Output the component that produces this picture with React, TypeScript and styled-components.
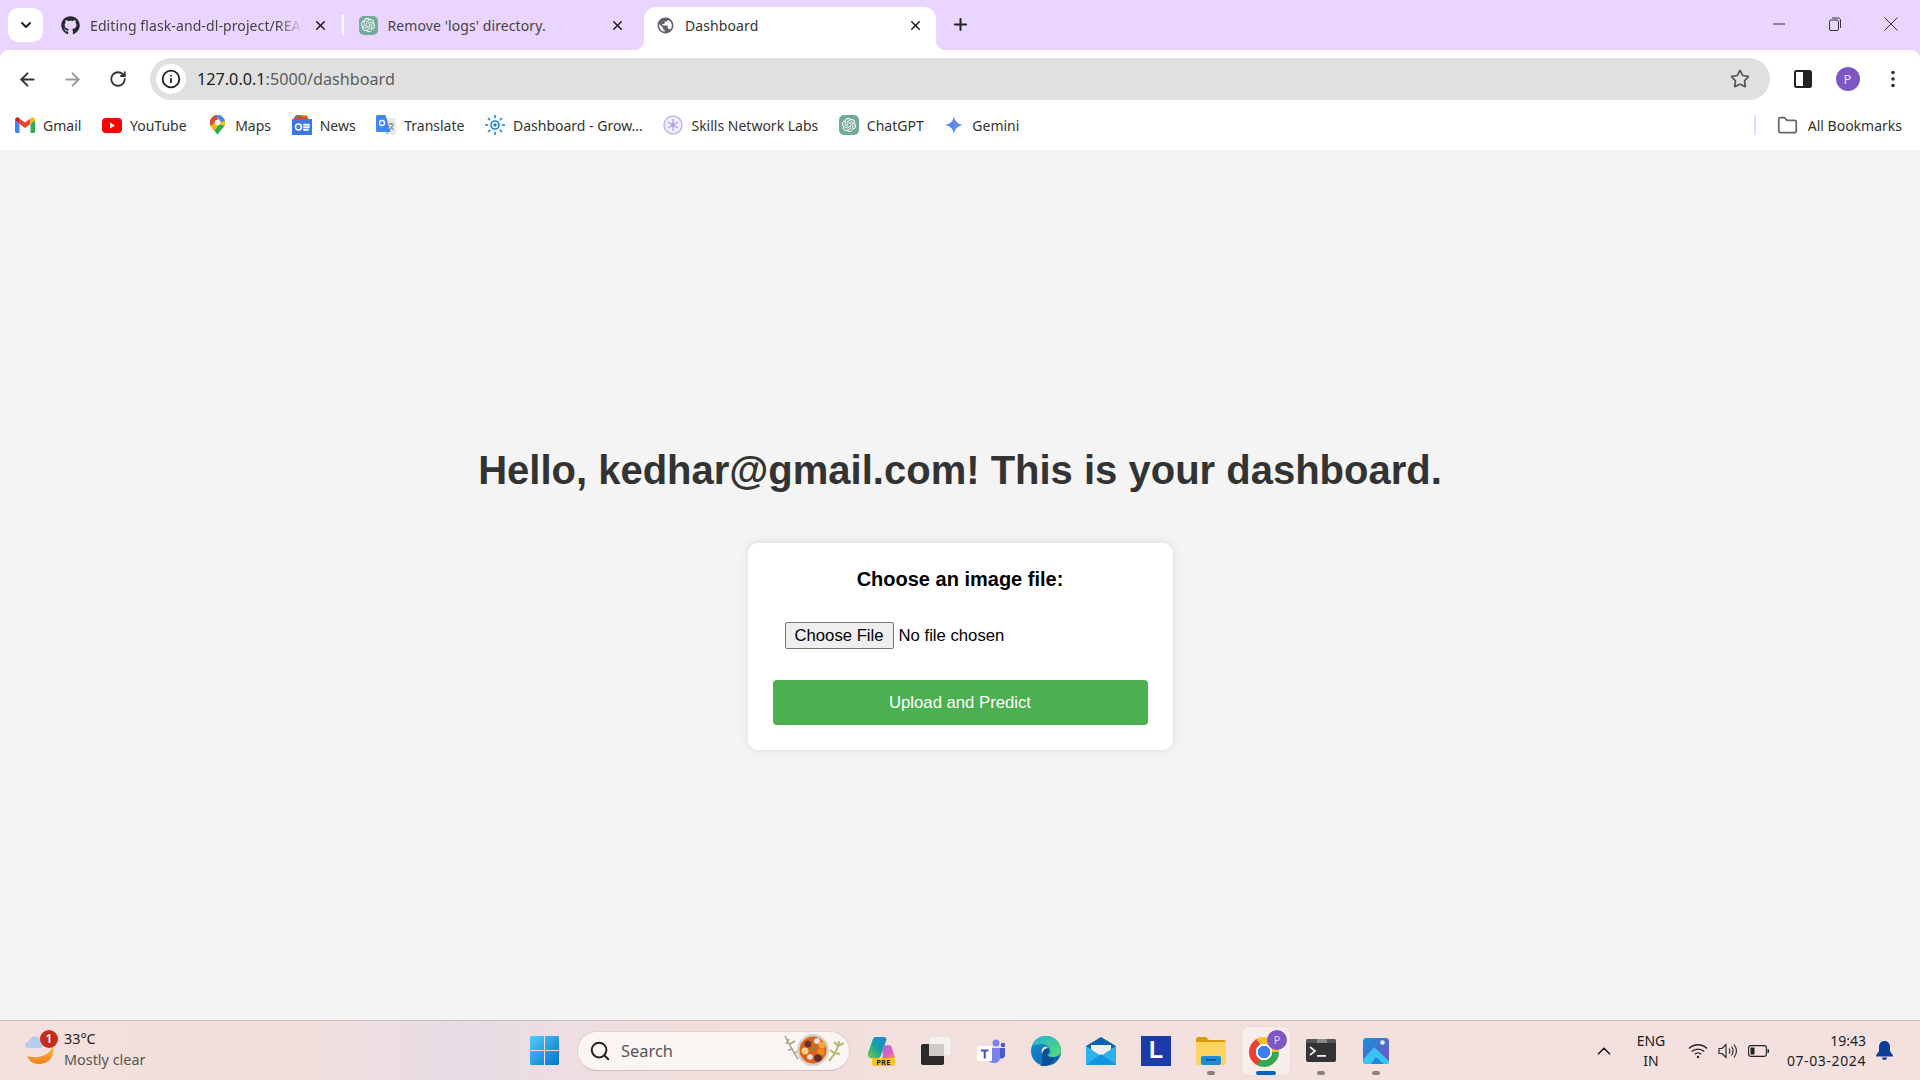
import type { ReactNode } from 'react';
import styled, { createGlobalStyle } from 'styled-components';
import { ArrowLeft, ArrowRight, ChevronDown, ChevronUp, Folder, Info, Plus, RotateCw, Search, Star, X } from 'lucide-react';
import { MdPublic } from 'react-icons/md';
import { FaGithub } from 'react-icons/fa';
import { SiOpenai } from 'react-icons/si';

const uiFont = `"Noto Sans", "Open Sans", sans-serif`;

const GlobalStyle = createGlobalStyle`
  html, body {
    margin: 0;
    padding: 0;
    height: 100%;
    overflow: hidden;
    background: #f4f4f4;
  }
  * {
    box-sizing: border-box;
  }
`;

const Screen = styled.div`
  width: 1920px;
  height: 1080px;
  display: flex;
  flex-direction: column;
  background: #e9d5ff;
  font-family: ${uiFont};
`;

/* ---------- tab strip ---------- */

const TabStrip = styled.div`
  height: 50px;
  flex: none;
  display: flex;
  align-items: flex-end;
  padding-left: 8px;
`;

const TabSearch = styled.div`
  width: 35px;
  height: 34px;
  margin: 0 6px 8px 0;
  border-radius: 10px;
  background: #fff;
  color: #222;
  display: flex;
  align-items: center;
  justify-content: center;
`;

const Tab = styled.div<{ $active?: boolean; $divider?: boolean }>`
  position: relative;
  width: 292px;
  height: 43px;
  margin-right: 5.5px;
  padding: 0 12px 7px 12px;
  display: flex;
  align-items: center;
  border-radius: 12px 12px 0 0;
  background: ${({ $active }) => ($active ? '#fff' : 'transparent')};
  color: ${({ $active }) => ($active ? '#333' : '#444')};

  ${({ $active }) =>
    $active &&
    `
    &::before, &::after {
      content: '';
      position: absolute;
      bottom: 0;
      width: 10px;
      height: 10px;
    }
    &::before {
      left: -10px;
      background: radial-gradient(circle at 0 0, transparent 10px, #fff 10.5px);
    }
    &::after {
      right: -10px;
      background: radial-gradient(circle at 100% 0, transparent 10px, #fff 10.5px);
    }
  `}

  ${({ $divider }) =>
    $divider &&
    `
    &::after {
      content: '';
      position: absolute;
      right: -3px;
      top: 8px;
      width: 2px;
      height: 20px;
      background: #fff;
    }
  `}
`;

const TabIcon = styled.div`
  width: 19px;
  height: 19px;
  flex: none;
  display: flex;
  align-items: center;
  justify-content: center;
`;

const GptFavicon = styled(TabIcon)<{ $size?: number }>`
  width: ${({ $size }) => $size ?? 19}px;
  height: ${({ $size }) => $size ?? 19}px;
  border-radius: 5px;
  background: #74aa9c;
  color: #fff;
`;

const TabTitle = styled.div<{ $fade?: boolean }>`
  margin-left: 10px;
  flex: 1;
  font-size: 14px;
  letter-spacing: 0.1px;
  white-space: nowrap;
  overflow: hidden;
  ${({ $fade }) =>
    $fade &&
    `
    mask-image: linear-gradient(90deg, #000 88%, transparent 100%);
  `}
`;

const TabClose = styled.div`
  width: 18px;
  height: 18px;
  margin-left: 8px;
  flex: none;
  color: #222;
  display: flex;
  align-items: center;
  justify-content: center;
`;

const NewTab = styled.div`
  width: 20px;
  height: 43px;
  margin-left: 9px;
  padding-bottom: 9px;
  color: #222;
  display: flex;
  align-items: center;
  justify-content: center;
  align-self: flex-end;
`;

const WindowControls = styled.div`
  margin-left: auto;
  height: 50px;
  display: flex;
  align-self: flex-start;
  padding-right: 1px;
`;

const WindowButton = styled.div`
  width: 56px;
  height: 48px;
  display: flex;
  align-items: center;
  justify-content: center;
  color: #333;
`;

/* ---------- toolbar ---------- */

const Toolbar = styled.div`
  height: 50px;
  flex: none;
  padding: 8px 5px 0 5px;
  display: flex;
  align-items: stretch;
  background: #fff;
  border-radius: 9px 9px 0 0;
`;

const NavButton = styled.div<{ $dim?: boolean }>`
  width: 45px;
  flex: none;
  display: flex;
  align-items: center;
  justify-content: center;
  color: ${({ $dim }) => ($dim ? '#9a9a9a' : '#333')};
`;

const AddressBar = styled.div`
  flex: 1;
  margin: 0 10px 0 10px;
  border-radius: 21px;
  background: #e0e0e0;
  display: flex;
  align-items: center;
  padding: 0 20px 0 6px;
`;

const InfoBadge = styled.div`
  width: 30px;
  height: 30px;
  border-radius: 50%;
  background: #fff;
  color: #222;
  display: flex;
  align-items: center;
  justify-content: center;
`;

const Url = styled.div`
  margin-left: 11px;
  font-size: 16.2px;
  color: #5c5c5c;
  white-space: nowrap;
`;

const UrlHost = styled.span`
  color: #202020;
`;

const StarSlot = styled.div`
  margin-left: auto;
  color: #555;
  display: flex;
`;

const Avatar = styled.div`
  width: 24px;
  height: 24px;
  border-radius: 50%;
  background: #7e57c2;
  color: #e8def8;
  font-size: 13px;
  display: flex;
  align-items: center;
  justify-content: center;
`;

/* ---------- bookmarks ---------- */

const BookmarkBar = styled.div`
  height: 50px;
  flex: none;
  padding: 0 18px 0 15px;
  display: flex;
  align-items: center;
  background: #fff;
`;

const Bookmark = styled.div`
  display: flex;
  align-items: center;
  gap: 8px;
  margin-right: 20.6px;
  font-size: 14px;
  color: #333;
  white-space: nowrap;
`;

const BookmarkIcon = styled.div`
  width: 20px;
  height: 20px;
  flex: none;
  display: flex;
  align-items: center;
  justify-content: center;
`;

const BookmarkDivider = styled.div`
  margin-left: auto;
  width: 2px;
  height: 20px;
  background: #e9d5ff;
  margin-right: 21px;
`;

const AllBookmarks = styled.div`
  display: flex;
  align-items: center;
  gap: 10px;
  font-size: 14px;
  color: #333;
  white-space: nowrap;
`;

/* ---------- page ---------- */

const Page = styled.main`
  flex: 1;
  min-height: 0;
  padding-top: 297px;
  background: #f4f4f4;
  display: flex;
  flex-direction: column;
  align-items: center;
  font-family: 'Liberation Sans', Arial, sans-serif;
`;

const Heading = styled.h1`
  margin: 0 0 50px;
  font-size: 40px;
  line-height: 46px;
  font-weight: 700;
  color: #333;
`;

const Card = styled.form`
  width: 425px;
  height: 207px;
  padding: 25px 25px 25px;
  background: #fff;
  border-radius: 10px;
  box-shadow: 0 0 10px rgba(0, 0, 0, 0.1);
  display: flex;
  flex-direction: column;
`;

const FieldLabel = styled.label`
  font-size: 20px;
  line-height: 23px;
  font-weight: 700;
  color: #000;
  text-align: center;
`;

const FileInput = styled.input`
  margin: 31px 0 0 12px;
  width: 340px;
  height: 27px;
  font-family: 'Liberation Sans', Arial, sans-serif;
  font-size: 16.7px;
  color: #000;

  &::file-selector-button {
    height: 27px;
    margin-right: 5px;
    padding: 0 9px;
    border: 1px solid #767676;
    border-radius: 2px;
    background: #efefef;
    color: #000;
    font: inherit;
  }
`;

const SubmitButton = styled.button`
  margin-top: 31px;
  height: 45px;
  border: none;
  border-radius: 4px;
  background: #4caf50;
  color: #fff;
  font-family: 'Liberation Sans', Arial, sans-serif;
  font-size: 16.7px;
`;

/* ---------- taskbar ---------- */

const Taskbar = styled.footer`
  height: 60px;
  flex: none;
  display: flex;
  align-items: center;
  border-top: 1px solid #cdbcbc;
  background: linear-gradient(90deg, #f4e0dc 0%, #f1dfdd 16%, #e8dde6 24%, #f1dfdd 36%, #f3e1de 60%, #f3e0df 100%);
`;

const Weather = styled.div`
  width: 530px;
  flex: none;
  padding-left: 24px;
  display: flex;
  align-items: center;
`;

const WeatherIcon = styled.div`
  position: relative;
  width: 30px;
  height: 36px;
  flex: none;
  margin-right: 10px;
`;

const WeatherBadge = styled.div`
  position: absolute;
  top: -3px;
  right: -4px;
  width: 18px;
  height: 18px;
  border-radius: 50%;
  background: #c42b1c;
  color: #fff;
  font-size: 12px;
  font-weight: 600;
  display: flex;
  align-items: center;
  justify-content: center;
`;

const WeatherText = styled.div`
  font-size: 14.4px;
  line-height: 21px;
  color: #1c1c1c;
  margin-top: -4px;
`;

const WeatherSub = styled.div`
  color: #555;
`;

const SearchPill = styled.div`
  width: 273px;
  height: 40px;
  margin: 0 7px 0 18px;
  padding: 0 1px 0 11px;
  flex: none;
  border-radius: 20px;
  background: #fbf5f4;
  border: 1px solid #e0d2d0;
  border-bottom-color: #cfc0be;
  display: flex;
  align-items: center;
  gap: 10px;
  font-size: 16.4px;
  color: #555;
`;

const Dish = styled.div`
  margin-left: auto;
  display: flex;
`;

const AppList = styled.div`
  display: flex;
  gap: 7px;
`;

const AppCell = styled.div<{ $active?: boolean }>`
  position: relative;
  width: 48px;
  height: 48px;
  border-radius: 5px;
  display: flex;
  align-items: center;
  justify-content: center;
  background: ${({ $active }) => ($active ? '#f7eeec' : 'transparent')};
  ${({ $active }) => $active && 'box-shadow: 0 0 1px rgba(0, 0, 0, 0.25);'}
`;

const RunDot = styled.div<{ $active?: boolean }>`
  position: absolute;
  bottom: 0;
  left: 50%;
  transform: translateX(-50%);
  width: ${({ $active }) => ($active ? 20 : 8)}px;
  height: 3.5px;
  border-radius: 2px;
  background: ${({ $active }) => ($active ? '#0067c0' : '#8a8080')};
`;

const CopilotSlot = styled.div`
  display: flex;
  margin-bottom: 4px;
`;

const PreTag = styled.div`
  position: absolute;
  left: 15px;
  top: 31px;
  width: 23px;
  height: 8px;
  border-radius: 2px;
  background: #fdc70c;
  color: #222;
  font-size: 7.5px;
  line-height: 8px;
  font-weight: 700;
  text-align: center;
  letter-spacing: 0.3px;
`;

const LetterTile = styled.div`
  width: 30px;
  height: 30px;
  background: #1c3aa9;
  color: #fff;
  font-family: 'Liberation Sans', Arial, sans-serif;
  font-weight: 700;
  font-size: 23px;
  display: flex;
  align-items: center;
  justify-content: center;
`;

const ChromeLogo = styled.div`
  width: 30px;
  height: 30px;
  margin: 2px 5px 0 0;
  border-radius: 50%;
  background:
    radial-gradient(circle, #3a7ff0 0 6px, #fff 6.5px 8px, transparent 8.5px),
    conic-gradient(from -30deg, #fbc02d 0 120deg, #34a853 120deg 240deg, #ea4335 240deg 360deg);
`;

const ChromeBadge = styled.div`
  position: absolute;
  top: 3px;
  right: 3px;
  width: 20px;
  height: 20px;
  border-radius: 50%;
  background: #7e57c2;
  color: #e0d4f5;
  font-size: 11px;
  display: flex;
  align-items: center;
  justify-content: center;
`;

const Tray = styled.div`
  margin-left: auto;
  padding-right: 26px;
  display: flex;
  align-items: center;
  color: #1c1c1c;
`;

const TrayIcon = styled.div<{ $width?: number }>`
  width: ${({ $width }) => $width ?? 30}px;
  display: flex;
  justify-content: center;
`;

const Lang = styled.div`
  width: 48px;
  margin: 0 8px;
  text-align: center;
  font-size: 14px;
  line-height: 20px;
`;

const Clock = styled.div`
  width: 93px;
  text-align: right;
  font-size: 14px;
  line-height: 20px;
  white-space: nowrap;
`;

const ClockDate = styled.div`
  letter-spacing: 0.6px;
`;

const Bell = styled.div`
  margin-left: 10px;
  width: 18px;
  display: flex;
`;

/* ---------- drawn icons ---------- */

const GmailIcon = () => (
  <svg width="20" height="16" viewBox="0 0 20 16">
    <path d="M0 3v11.500C0 15.300.7 16 1.500 16H4.500V7z" fill="#4285f4" />
    <path d="M20 3v11.500c0 .8-.7 1.500-1.500 1.500h-3V7z" fill="#34a853" />
    <path d="M4.500 7V1.500L10 5.600l5.500-4.100V7L10 11z" fill="#ea4335" />
    <path d="M0 3c0-2.500 2.800-3.700 4.500-2V7z" fill="#c5221f" />
    <path d="M20 3c0-2.500-2.800-3.700-4.500-2V7z" fill="#fbbc04" />
  </svg>
);

const YoutubeIcon = () => (
  <svg width="20" height="15" viewBox="0 0 20 15">
    <rect width="20" height="15" rx="4" fill="#f00" />
    <path d="M8 4.500v6l5-3z" fill="#fff" />
  </svg>
);

const MapsIcon = () => (
  <svg width="15" height="20" viewBox="0 0 15 20">
    <defs>
      <clipPath id="pin">
        <path d="M7.500 0A7.500 7.500 0 0 0 0 7.500c0 3.800 2.500 5.800 4.500 8.300 1.400 1.700 2.400 3 3 4.200.6-1.200 1.600-2.500 3-4.200 2-2.500 4.500-4.500 4.500-8.300A7.500 7.500 0 0 0 7.500 0z" />
      </clipPath>
    </defs>
    <g clipPath="url(#pin)">
      <rect width="15" height="20" fill="#34a853" />
      <path d="M0 0h15v11L7 9 0 5z" fill="#fbbc04" />
      <path d="M0 0h7.500L7 6 1 12H0z" fill="#ea4335" />
      <path d="M5 0h10v6l-4 1-2-3z" fill="#4285f4" />
      <path d="M0 11l5-3 3 3-4 5z" fill="#fbbc04" />
    </g>
    <circle cx="7.500" cy="7.500" r="2.800" fill="#fff" />
  </svg>
);

const NewsIcon = () => (
  <svg width="20" height="20" viewBox="0 0 20 20">
    <path d="M3 3V1.500C3 .7 3.700 0 4.500 0h9c.8 0 1.500.7 1.500 1.500V3z" fill="#34a853" />
    <path d="M10 0h4l3 4h-7z" fill="#fbbc04" />
    <path d="M2 2l13-1 1 3H2z" fill="#ea4335" />
    <rect y="4" width="20" height="16" fill="#3b78e7" />
    <circle cx="6.500" cy="12" r="3" fill="none" stroke="#fff" strokeWidth="1.500" />
    <path d="M6.500 12H9.500M11.500 9h6v1.500h-6zM11.500 11.500h6V13h-6zM11.500 14h5v1.500h-5z" fill="#fff" stroke="#fff" strokeWidth="0.400" />
  </svg>
);

const TranslateIcon = () => (
  <svg width="20" height="20" viewBox="0 0 20 20">
    <path d="M9 3h9.500c.8 0 1.500.7 1.500 1.500v14c0 .8-.7 1.500-1.500 1.500H10z" fill="#e8eaed" />
    <path d="M1.500 0h8l5 17H1.500C.7 17 0 16.300 0 15.500v-14C0 .7.700 0 1.500 0z" fill="#4285f4" />
    <path d="M10 17l2.500 3-1.500-3z" fill="#3367d6" />
    <circle cx="6" cy="8" r="2.500" fill="none" stroke="#fff" strokeWidth="1.300" />
    <path d="M13 9h5M15.500 8v1.500M14 15l3.500-5M14.500 11l3 4" stroke="#777" strokeWidth="1" fill="none" />
  </svg>
);

const DashboardIcon = () => (
  <svg width="20" height="20" viewBox="0 0 20 20" fill="none">
    <circle cx="10" cy="10" r="4" stroke="#1a84d8" strokeWidth="1.600" />
    <circle cx="10" cy="10" r="1.700" fill="#1a84d8" />
    <path d="M10 0v3.200M10 16.800V20M0 10h3.200M16.800 10H20M3 3l2.200 2.200M14.800 14.800L17 17M17 3l-2.200 2.200M5.200 14.800L3 17" stroke="#1a84d8" strokeWidth="1.600" />
  </svg>
);

const SkillsIcon = () => (
  <svg width="20" height="20" viewBox="0 0 20 20" fill="none">
    <circle cx="10" cy="10" r="9" fill="#f1ecfb" stroke="#c7b8ea" strokeWidth="1.500" />
    <path d="M10 4v12M5 7l10 6M15 7L5 13" stroke="#b3a2de" strokeWidth="1.300" />
    <circle cx="10" cy="10" r="2" fill="#b3a2de" />
  </svg>
);

const GeminiIcon = () => (
  <svg width="18" height="18" viewBox="0 0 18 18">
    <defs>
      <linearGradient id="gem" x1="0" y1="1" x2="1" y2="0">
        <stop offset="0" stopColor="#4285f4" />
        <stop offset="1" stopColor="#7b8fe8" />
      </linearGradient>
    </defs>
    <path d="M9 0c.8 5 3.500 8 9 9-5.500 1-8.200 4-9 9-.8-5-3.500-8-9-9 5.500-1 8.200-4 9-9z" fill="url(#gem)" />
  </svg>
);

const SidePanelIcon = () => (
  <svg width="18" height="18" viewBox="0 0 18 18">
    <rect x="1" y="1" width="16" height="16" rx="1.500" fill="none" stroke="#222" strokeWidth="2" />
    <rect x="9" y="1" width="8" height="16" fill="#222" />
  </svg>
);

const DotsIcon = () => (
  <svg width="4" height="18" viewBox="0 0 4 18" fill="#333">
    <circle cx="2" cy="2.500" r="1.800" />
    <circle cx="2" cy="9" r="1.800" />
    <circle cx="2" cy="15.500" r="1.800" />
  </svg>
);

const MinIcon = () => (
  <svg width="12" height="12" viewBox="0 0 12 12">
    <path d="M0 6h12" stroke="#333" strokeWidth="1" />
  </svg>
);

const RestoreIcon = () => (
  <svg width="12" height="14" viewBox="0 0 12 14" fill="none" stroke="#333" strokeWidth="1">
    <rect x="0.500" y="3" width="9" height="10.500" rx="1.500" />
    <path d="M3 1h6.500c1 0 2 1 2 2v8" />
  </svg>
);

const CloseIcon = () => (
  <svg width="14" height="14" viewBox="0 0 14 14">
    <path d="M.5.500l13 13M13.500.500l-13 13" stroke="#333" strokeWidth="1" />
  </svg>
);

const CloudMoonIcon = () => (
  <svg width="30" height="36" viewBox="0 0 30 36">
    <defs>
      <linearGradient id="moon" x1="0" y1="0" x2="0" y2="1">
        <stop offset="0" stopColor="#fdbb3c" />
        <stop offset="1" stopColor="#ee7f1f" />
      </linearGradient>
    </defs>
    <path d="M29 13c2 11-5 18-14 18-6 0-10-3-12-8 10 3 21 1 26-10z" fill="url(#moon)" />
    <path d="M5 15c-2.500 0-4-1.300-4-3.200C1 10 2.500 8.700 4.500 8.700 5.500 5.500 8 3.500 11 3.500c3.500 0 6.500 2.500 7 6V15z" fill="#b3cdee" />
  </svg>
);

const WinLogo = () => (
  <svg width="29" height="29" viewBox="0 0 29 29">
    <defs>
      <linearGradient id="win" x1="0" y1="0" x2="1" y2="1">
        <stop offset="0" stopColor="#52cdf9" />
        <stop offset="1" stopColor="#0272cf" />
      </linearGradient>
    </defs>
    <path d="M0 1.500C0 .7.700 0 1.500 0H14v14H0zM15 0h12.500c.8 0 1.500.7 1.500 1.500V14H15zM0 15h14v14H1.500C.7 29 0 28.300 0 27.500zM15 15h14v12.500c0 .8-.7 1.500-1.500 1.500H15z" fill="url(#win)" />
  </svg>
);

const DishIcon = () => (
  <svg width="64" height="36" viewBox="0 0 64 36" fill="none">
    <path d="M1 3c3 6 7 14 13 23M5 6l-3 5M6 11l5-3M9 16l-5 1M11 20l4-3" stroke="#a5a37f" strokeWidth="1.500" />
    <path d="M45 28c5-6 10-14 10-20M50 20l-4-3M50 20l6 1M54 13l-4-4M54 13l6-3" stroke="#b5bb72" strokeWidth="2" />
    <circle cx="29" cy="17" r="16" fill="#d8d2cc" />
    <circle cx="29" cy="17" r="13.500" fill="#e0611c" />
    <circle cx="24" cy="11" r="3.500" fill="#6b3327" />
    <circle cx="33" cy="8" r="3" fill="#e9e0d8" />
    <circle cx="38" cy="12" r="3.500" fill="#f3a52d" />
    <circle cx="21" cy="18" r="3.500" fill="#f5d188" />
    <circle cx="29" cy="16" r="1.800" fill="#5aa02c" />
    <circle cx="37" cy="19" r="3.500" fill="#f28a1e" />
    <circle cx="26" cy="24" r="2.800" fill="#ece4da" />
    <circle cx="34" cy="25" r="3.800" fill="#5f2d24" />
  </svg>
);

const CopilotIcon = () => (
  <svg width="28" height="24" viewBox="0 0 30 26">
    <defs>
      <linearGradient id="copA" x1="0" y1="1" x2="1" y2="0">
        <stop offset="0" stopColor="#7ec83f" />
        <stop offset="0.5" stopColor="#12a3a0" />
        <stop offset="1" stopColor="#1f7fe0" />
      </linearGradient>
      <linearGradient id="copB" x1="0" y1="0" x2="1" y2="1">
        <stop offset="0" stopColor="#9e66e8" />
        <stop offset="0.6" stopColor="#e060c0" />
        <stop offset="1" stopColor="#f4a03c" />
      </linearGradient>
    </defs>
    <path d="M9 0h9c1.500 0 2.500.8 3 2.500L15 20c-.6 1.800-2 3-4 3H5c-3.500 0-5-3-4-6L6 3c.5-2 1.500-3 3-3z" fill="url(#copA)" />
    <path d="M17 9h7c1 0 2 .8 2.500 2L29.500 20c.8 2.500-.8 5-3.500 5H13c2 0 3.200-1.200 3.800-3z" fill="url(#copB)" />
  </svg>
);

const TaskViewIcon = () => (
  <svg width="30" height="30" viewBox="0 0 30 30">
    <rect x="8" y="0" width="22" height="20" rx="2" fill="#f4f1ef" stroke="#e2dcda" />
    <rect x="0" y="8" width="23" height="21" rx="2" fill="#2a2a2a" />
    <rect x="8" y="8" width="15" height="12" fill="#cfcac8" />
  </svg>
);

const TeamsIcon = () => (
  <svg width="28" height="24" viewBox="0 0 28 24">
    <circle cx="19" cy="4" r="3.500" fill="#7b83eb" />
    <circle cx="26" cy="6" r="2.300" fill="#5059c9" />
    <path d="M22 9h6v7c0 2-1.500 3.500-3.500 3.500H22z" fill="#5059c9" />
    <path d="M11 9h12v10c0 3-2.500 5-6 5s-6-2-6-5z" fill="#7b83eb" />
    <rect x="0" y="7" width="15" height="15" fill="#fff" />
    <path d="M4 10.500h7.500v2h-2.700v7H6.700v-7H4z" fill="#4b53bc" />
  </svg>
);

const EdgeIcon = () => (
  <svg width="30" height="30" viewBox="0 0 30 30">
    <defs>
      <linearGradient id="edgeA" x1="0" y1="0" x2="1" y2="1">
        <stop offset="0" stopColor="#1fb5d6" />
        <stop offset="1" stopColor="#5fdc6b" />
      </linearGradient>
      <linearGradient id="edgeB" x1="0" y1="0" x2="1" y2="1">
        <stop offset="0" stopColor="#1592d8" />
        <stop offset="1" stopColor="#0c5ea8" />
      </linearGradient>
    </defs>
    <circle cx="15" cy="15" r="15" fill="url(#edgeB)" />
    <path d="M1 10C3 3 9 0 15 0c8 0 15 6 15 14 0 5-4 7-8 7-3 0-5-1-5-2 2-1 3-3 2-5-1-4-5-6-9-6-4 0-7 1-9 2z" fill="url(#edgeA)" />
    <path d="M11 21c-1-5 2-9 6-9 1 1 1 5-1 7 1 3 5 3 8 2-2 5-6 9-11 9-2 0-4-.5-4-1 3 0 3-4 2-8z" fill="#0b4f96" />
    <path d="M17 12c-3 0-5 2-6 6-1-3 0-6 2-7 2-.5 3 0 4 1z" fill="#f3e0df" />
  </svg>
);

const MailIcon = () => (
  <svg width="30" height="28" viewBox="0 0 30 28">
    <path d="M0 9L15 0l15 9v5H0z" fill="#0f62ad" />
    <path d="M5 8h20v8L15 21 5 16z" fill="#f3eeee" />
    <path d="M0 9l15 10L30 9v19H0z" fill="#2cb0ee" />
    <path d="M0 28L15 17l15 11z" fill="#1593e0" />
  </svg>
);

const FolderIcon = () => (
  <svg width="30" height="28" viewBox="0 0 30 28">
    <path d="M0 2c0-1 .8-2 2-2h8l3 3h15c1 0 2 1 2 2v6H0z" fill="#dc9c0a" />
    <path d="M0 5h30v21c0 1-1 2-2 2H2c-1 0-2-1-2-2z" fill="#fcd462" />
    <rect x="5" y="19" width="20" height="9" rx="2" fill="#1f8bd6" />
    <rect x="10" y="22" width="10" height="1.500" fill="#0a4e8c" />
  </svg>
);

const TerminalIcon = () => (
  <svg width="30" height="23" viewBox="0 0 30 23">
    <rect width="30" height="23" rx="2" fill="#333" />
    <path d="M2 0h9v4H0V2c0-1 1-2 2-2z" fill="#555" />
    <rect x="11" y="0" width="10" height="4" fill="#8a8a8a" />
    <path d="M21 0h7c1 0 2 1 2 2v2h-9z" fill="#555" />
    <path d="M4 8l5 4-5 4" stroke="#eee" strokeWidth="1.700" fill="none" />
    <rect x="11" y="16" width="9" height="1.800" fill="#eee" />
  </svg>
);

const PhotosIcon = () => (
  <svg width="26" height="26" viewBox="0 0 26 26">
    <defs>
      <linearGradient id="photo" x1="0" y1="0" x2="1" y2="1">
        <stop offset="0" stopColor="#1590e0" />
        <stop offset="1" stopColor="#7b4fb8" />
      </linearGradient>
    </defs>
    <rect width="26" height="26" rx="3.500" fill="url(#photo)" />
    <circle cx="19.500" cy="4.500" r="2.300" fill="#e8f4fc" />
    <path d="M0 22L11 9l15 14c0 2-1 3-3 3H3c-2 0-3-2-3-4z" fill="#39c5f0" />
    <path d="M8 26l5-7 8 7z" fill="#1b8ad6" />
  </svg>
);

const WifiIcon = () => (
  <svg width="20" height="16" viewBox="0 0 20 16" fill="none" stroke="#222" strokeWidth="1.300">
    <path d="M1 5.500c5-5 13-5 18 0M3.800 8.500c3.500-3.300 8.900-3.300 12.400 0M6.700 11.300c1.900-1.700 4.700-1.700 6.600 0" />
    <circle cx="10" cy="14" r="1.200" fill="#222" stroke="none" />
  </svg>
);

const VolumeIcon = () => (
  <svg width="20" height="16" viewBox="0 0 20 16" fill="none" stroke="#222" strokeWidth="1.100">
    <path d="M1 5.500h3l4-4v13l-4-4H1z" />
    <path d="M11 5.500c1 1.500 1 3.500 0 5M13.500 3.500c2 2.800 2 6.200 0 9M16 1.500c3 4 3 9 0 13" />
  </svg>
);

const BatteryIcon = () => (
  <svg width="21" height="12" viewBox="0 0 21 12">
    <rect x="0.600" y="0.600" width="17.800" height="10.800" rx="2.500" fill="none" stroke="#222" strokeWidth="1.100" />
    <rect x="2.500" y="2.500" width="4" height="7" rx="0.800" fill="#222" />
    <path d="M19.500 4h.5c.5 0 1 .5 1 1v2c0 .5-.5 1-1 1h-.5z" fill="#222" />
  </svg>
);

const BellIcon = () => (
  <svg width="17" height="19" viewBox="0 0 17 19" fill="#0b3f9c">
    <path d="M8.500 0C5 0 3 2.700 3 6v4L0 14.500c-.3.500 0 1 .5 1h16c.5 0 .8-.5.5-1L14 10V6c0-3.300-2-6-5.500-6z" />
    <path d="M6 16.500h5c0 1.500-1 2.500-2.500 2.500S6 18 6 16.500z" />
  </svg>
);

const tabs: { title: string; icon: ReactNode; fade?: boolean; divider?: boolean; active?: boolean }[] = [
  { title: 'Editing flask-and-dl-project/README.md', icon: <FaGithub size={19} color="#24292f" />, fade: true, divider: true },
  { title: "Remove 'logs' directory.", icon: <GptFavicon><SiOpenai size={14} /></GptFavicon> },
  { title: 'Dashboard', icon: <MdPublic size={21} color="#5f6368" />, active: true },
];

const bookmarks: { label: string; icon: ReactNode }[] = [
  { label: 'Gmail', icon: <GmailIcon /> },
  { label: 'YouTube', icon: <YoutubeIcon /> },
  { label: 'Maps', icon: <MapsIcon /> },
  { label: 'News', icon: <NewsIcon /> },
  { label: 'Translate', icon: <TranslateIcon /> },
  { label: 'Dashboard - Grow...', icon: <DashboardIcon /> },
  { label: 'Skills Network Labs', icon: <SkillsIcon /> },
  { label: 'ChatGPT', icon: <GptFavicon $size={20}><SiOpenai size={14} /></GptFavicon> },
  { label: 'Gemini', icon: <GeminiIcon /> },
];

const App = () => {
  return (
    <>
      <GlobalStyle />
      <Screen>
        <TabStrip>
          <TabSearch>
            <ChevronDown size={16} strokeWidth={3} />
          </TabSearch>
          {tabs.map((tab) => (
            <Tab key={tab.title} $active={tab.active} $divider={tab.divider}>
              <TabIcon>{tab.icon}</TabIcon>
              <TabTitle $fade={tab.fade}>{tab.title}</TabTitle>
              <TabClose>
                <X size={15} strokeWidth={2.5} />
              </TabClose>
            </Tab>
          ))}
          <NewTab>
            <Plus size={19} strokeWidth={2.5} />
          </NewTab>
          <WindowControls>
            <WindowButton><MinIcon /></WindowButton>
            <WindowButton><RestoreIcon /></WindowButton>
            <WindowButton><CloseIcon /></WindowButton>
          </WindowControls>
        </TabStrip>

        <Toolbar>
          <NavButton><ArrowLeft size={21} strokeWidth={2.2} /></NavButton>
          <NavButton $dim><ArrowRight size={21} strokeWidth={2.2} /></NavButton>
          <NavButton><RotateCw size={18} strokeWidth={2.4} /></NavButton>
          <AddressBar>
            <InfoBadge><Info size={20} strokeWidth={2.2} /></InfoBadge>
            <Url><UrlHost>127.0.0.1</UrlHost>:5000/dashboard</Url>
            <StarSlot><Star size={20} strokeWidth={2} /></StarSlot>
          </AddressBar>
          <NavButton><SidePanelIcon /></NavButton>
          <NavButton><Avatar>P</Avatar></NavButton>
          <NavButton><DotsIcon /></NavButton>
        </Toolbar>

        <BookmarkBar>
          {bookmarks.map((item) => (
            <Bookmark key={item.label}>
              <BookmarkIcon>{item.icon}</BookmarkIcon>
              {item.label}
            </Bookmark>
          ))}
          <BookmarkDivider />
          <AllBookmarks>
            <Folder size={21} color="#666" strokeWidth={2} />
            All Bookmarks
          </AllBookmarks>
        </BookmarkBar>

        <Page>
          <Heading>Hello, kedhar@gmail.com! This is your dashboard.</Heading>
          <Card onSubmit={(e) => e.preventDefault()}>
            <FieldLabel htmlFor="file">Choose an image file:</FieldLabel>
            <FileInput id="file" type="file" />
            <SubmitButton type="submit">Upload and Predict</SubmitButton>
          </Card>
        </Page>

        <Taskbar>
          <Weather>
            <WeatherIcon>
              <CloudMoonIcon />
              <WeatherBadge>1</WeatherBadge>
            </WeatherIcon>
            <WeatherText>
              33°C
              <WeatherSub>Mostly clear</WeatherSub>
            </WeatherText>
          </Weather>
          <WinLogo />
          <SearchPill>
            <Search size={22} color="#222" strokeWidth={2.2} />
            Search
            <Dish><DishIcon /></Dish>
          </SearchPill>
          <AppList>
            <AppCell><CopilotSlot><CopilotIcon /></CopilotSlot><PreTag>PRE</PreTag></AppCell>
            <AppCell><TaskViewIcon /></AppCell>
            <AppCell><TeamsIcon /></AppCell>
            <AppCell><EdgeIcon /></AppCell>
            <AppCell><MailIcon /></AppCell>
            <AppCell><LetterTile>L</LetterTile></AppCell>
            <AppCell><FolderIcon /><RunDot /></AppCell>
            <AppCell $active>
              <ChromeLogo />
              <ChromeBadge>P</ChromeBadge>
              <RunDot $active />
            </AppCell>
            <AppCell><TerminalIcon /><RunDot /></AppCell>
            <AppCell><PhotosIcon /><RunDot /></AppCell>
          </AppList>
          <Tray>
            <TrayIcon><ChevronUp size={22} strokeWidth={1.8} /></TrayIcon>
            <Lang>ENG<br />IN</Lang>
            <TrayIcon><WifiIcon /></TrayIcon>
            <TrayIcon><VolumeIcon /></TrayIcon>
            <TrayIcon><BatteryIcon /></TrayIcon>
            <Clock>
              19:43
              <ClockDate>07-03-2024</ClockDate>
            </Clock>
            <Bell><BellIcon /></Bell>
          </Tray>
        </Taskbar>
      </Screen>
    </>
  );
};

export default App;
